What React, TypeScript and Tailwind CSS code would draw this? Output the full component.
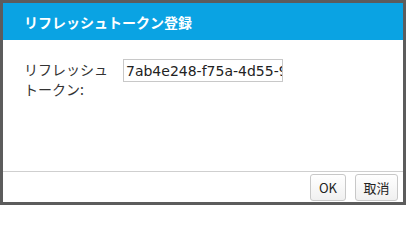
import React from "react";

export default function App() {
  const jp = { fontFamily: '"Noto Sans CJK JP", "DejaVu Sans", sans-serif' };
  return (
    <div className="w-[406px] h-[205px] bg-[#5c5c5c] pt-[3px] pl-[3px] pr-[3px] pb-[3px] box-border" style={jp}>
      <div className="flex flex-col h-full bg-white">
        <div className="h-[37px] bg-[#0aa3e3] flex items-center pl-[21px]">
          <span className="text-white font-bold text-[14px] leading-none">リフレッシュトークン登録</span>
        </div>
        <div className="flex-1 flex items-start pl-[21px] pt-[19px]">
          <div className="w-[99px] text-[14px] leading-[20px] text-[#333]">
            リフレッシュ
            <br />
            トークン:
          </div>
          <div className="w-[160px] h-[23px] border border-[#c8c8c8] overflow-hidden flex items-center pl-[2px]">
            <span
              className="whitespace-nowrap text-[14px] text-[#222] leading-none"
              style={{ fontFamily: '"DejaVu Sans", sans-serif' }}
            >
              7ab4e248-f75a-4d55-9c1e-3b2a0f6d8e71
            </span>
          </div>
        </div>
        <div className="h-[1px] bg-[#cfcfcf]" />
        <div className="h-[30px] flex items-center justify-end pr-[5px] gap-[9px] pt-[1px]">
          <button className="h-[27px] w-[36px] border border-[#c8c8c8] rounded-[3px] bg-gradient-to-b from-white to-[#f0f0f0] text-[13px] text-[#222] flex items-center justify-center">
            OK
          </button>
          <button className="h-[27px] w-[43px] border border-[#c8c8c8] rounded-[3px] bg-gradient-to-b from-white to-[#f0f0f0] text-[13px] text-[#222] flex items-center justify-center">
            取消
          </button>
        </div>
      </div>
    </div>
  );
}
